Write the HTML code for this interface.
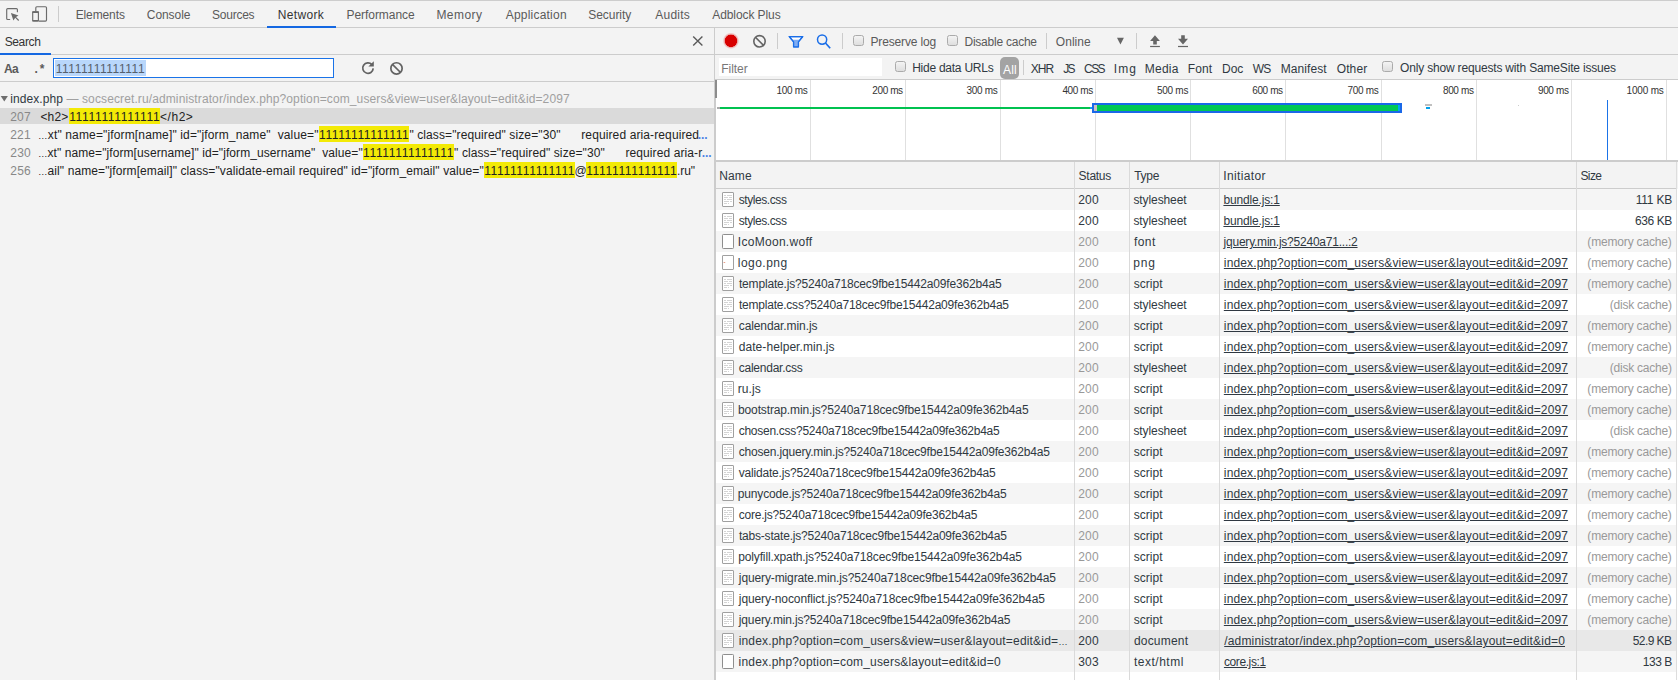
<!DOCTYPE html><html><head><meta charset="utf-8"><title>DevTools</title><style>

html,body{margin:0;padding:0;}
body{width:1678px;height:680px;overflow:hidden;background:#fff;position:relative;font-family:"Liberation Sans", sans-serif;font-size:12px;}
.r{position:absolute;}
.t{position:absolute;white-space:pre;line-height:16px;height:16px;}
svg{position:absolute;overflow:visible;}
u{text-decoration:underline;text-underline-offset:1px;}
.h{background:#f3ea06;}

</style></head><body>
<div class="r" style="left:0px;top:0px;width:1678px;height:680px;background:#ffffff;"></div>
<div class="r" style="left:0px;top:0px;width:1678px;height:27px;background:#f3f3f3;"></div>
<div class="r" style="left:0px;top:0px;width:1678px;height:1px;background:#cdcdcd;"></div>
<div class="r" style="left:0px;top:27px;width:1678px;height:1px;background:#cccccc;"></div>
<div class="r" style="left:0px;top:28px;width:714px;height:652px;background:#f3f3f3;"></div>
<div class="r" style="left:0px;top:54px;width:714px;height:1px;background:#cccccc;"></div>
<div class="r" style="left:0px;top:81px;width:714px;height:1px;background:#cccccc;"></div>
<div class="r" style="left:714px;top:28px;width:1px;height:652px;background:#cccccc;"></div>
<div class="r" style="left:715px;top:28px;width:963px;height:26px;background:#f3f3f3;"></div>
<div class="r" style="left:715px;top:54px;width:963px;height:1px;background:#cccccc;"></div>
<div class="r" style="left:715px;top:55px;width:963px;height:24px;background:#f3f3f3;"></div>
<div class="r" style="left:715px;top:79px;width:963px;height:1px;background:#cccccc;"></div>
<div class="r" style="left:715px;top:80px;width:963px;height:80px;background:#ffffff;"></div>
<div class="r" style="left:715px;top:160px;width:963px;height:2px;background:#cccccc;"></div>
<div class="r" style="left:715px;top:162px;width:962px;height:26px;background:#f3f3f3;"></div>
<div class="r" style="left:715px;top:188px;width:962px;height:1px;background:#cccccc;"></div>
<div class="r" style="left:715px;top:80px;width:1px;height:600px;background:#cccccc;"></div>
<div class="r" style="left:267px;top:26px;width:69px;height:2px;background:#1468e2;"></div>
<svg style="left:0;top:0" width="64" height="28" viewBox="0 0 64 28"><g fill="none" stroke="#6b6b6b" stroke-width="1.15" stroke-linecap="round"><path d="M17.4 11.7V9.6a1 1 0 0 0-1-1H7.7a1 1 0 0 0-1 1V18.5a1 1 0 0 0 1 1H9.7"/><path d="M35.8 11V7.7a1 1 0 0 1 1-1H45.5a1 1 0 0 1 1 1V20.1a1 1 0 0 1-1 1H39.2"/><rect x="32.7" y="11.9" width="5.7" height="9.1" rx="0.9"/></g><path d="M10.9 13L18.5 15.5L16 16.9L19.1 20L18.3 20.9L15.2 17.8L13.4 20.5Z" fill="#6b6b6b"/><rect x="32.2" y="11.2" width="6.7" height="1.7" rx="0.6" fill="#6b6b6b"/><rect x="32.2" y="20" width="6.7" height="1.6" rx="0.6" fill="#6b6b6b"/></svg>
<div class="r" style="left:58px;top:6px;width:1px;height:16px;background:#cccccc;"></div>
<div class="r" style="left:0px;top:53px;width:51px;height:2px;background:#1468e2;"></div>
<svg style="left:692px;top:36px" width="12" height="10" viewBox="0 0 12 10"><path d="M1.2 0.6L10.4 9.6M10.4 0.6L1.2 9.6" stroke="#5a5a5a" stroke-width="1.4" fill="none"/></svg>
<div class="r" style="left:53px;top:58px;width:281px;height:20px;background:#ffffff;box-sizing:border-box;border:1.3px solid #1a73e8;"></div>
<div class="r" style="left:55px;top:60px;width:91px;height:16px;background:#b9d7fb;"></div>
<svg style="left:340px;top:54px" width="80" height="28" viewBox="340 54 80 28"><path d="M371.9 64.6A5.25 5.25 0 1 0 373.2 68.4" fill="none" stroke="#626262" stroke-width="1.7"/><path d="M373.8 61.2V66.6H368.4Z" fill="#626262"/><circle cx="396.5" cy="68.4" r="5.65" fill="none" stroke="#626262" stroke-width="1.7"/><path d="M392.4 64.3L400.6 72.5" stroke="#626262" stroke-width="1.7"/></svg>
<svg style="left:0px;top:90px" width="10" height="14" viewBox="0 90 10 14"><path d="M0.7 96H7.9L4.3 101.5Z" fill="#6e6e6e"/></svg>
<div class="r" style="left:0px;top:108px;width:714px;height:16px;background:#dadada;"></div>
<div class="r" style="left:69.1px;top:108px;width:90.9px;height:16px;background:#f3ea06;"></div>
<div class="r" style="left:318.9px;top:126px;width:90.40000000000003px;height:16px;background:#f3ea06;"></div>
<div class="r" style="left:362.9px;top:144px;width:91.0px;height:16px;background:#f3ea06;"></div>
<div class="r" style="left:484.1px;top:162px;width:90.79999999999995px;height:16px;background:#f3ea06;"></div>
<div class="r" style="left:586.1px;top:162px;width:90.89999999999998px;height:16px;background:#f3ea06;"></div>
<svg style="left:716px;top:28px" width="130" height="26" viewBox="0 0 130 26"><defs><radialGradient id="rg"><stop offset="0.70" stop-color="#d80000"/><stop offset="0.76" stop-color="#e98080" stop-opacity="0.8"/><stop offset="1" stop-color="#f0b0b0" stop-opacity="0"/></radialGradient></defs><circle cx="14.95" cy="12.8" r="8.4" fill="url(#rg)"/><circle cx="43.5" cy="13.3" r="5.7" fill="none" stroke="#636363" stroke-width="1.6"/><path d="M39.4 9.2L47.6 17.4" stroke="#636363" stroke-width="1.6"/><path d="M73.3 8.6H86.7L82.4 13.8V18.8H77.6V13.8Z" fill="#ffffff" stroke="#1a6ee8" stroke-width="1.3" stroke-linejoin="round"/><path d="M76 11.7H84L82.4 13.8V18.8H77.6V13.8Z" fill="#7fadf3"/><path d="M73.3 8.6H86.7L82.4 13.8V18.8H77.6V13.8Z" fill="none" stroke="#1a6ee8" stroke-width="1.3" stroke-linejoin="round"/><circle cx="106.1" cy="11.6" r="4.6" fill="none" stroke="#1a6ee8" stroke-width="1.5"/><path d="M109.5 15L114.2 20.2" stroke="#1a6ee8" stroke-width="1.7"/></svg>
<div class="r" style="left:777px;top:33px;width:1px;height:16px;background:#cccccc;"></div>
<div class="r" style="left:842px;top:33px;width:1px;height:16px;background:#cccccc;"></div>
<div class="r" style="left:853px;top:35px;width:11px;height:11px;background:;box-sizing:border-box;border:1px solid #ababab;border-radius:2.5px;background:linear-gradient(#f4f4f4,#dedede);"></div>
<div class="r" style="left:947px;top:35px;width:11px;height:11px;background:;box-sizing:border-box;border:1px solid #ababab;border-radius:2.5px;background:linear-gradient(#f4f4f4,#dedede);"></div>
<div class="r" style="left:1046px;top:33px;width:1px;height:16px;background:#cccccc;"></div>
<svg style="left:1040px;top:28px" width="160" height="26" viewBox="1040 28 160 26"><g fill="#666666"><path d="M1117 37.8H1123.9L1120.45 44.4Z"/><path d="M1154.95 35.2L1159.9 40.9H1156.8V44.4H1153.2V40.9H1150.1Z"/><rect x="1150.1" y="45.9" width="9.8" height="1.2"/><path d="M1183 44.4L1188 38.7H1184.8V35.2H1181.2V38.7H1178Z"/><rect x="1178" y="45.9" width="10" height="1.2"/></g></svg>
<div class="r" style="left:1136px;top:33px;width:1px;height:16px;background:#cccccc;"></div>
<div class="r" style="left:719px;top:58px;width:163px;height:18px;background:#ffffff;"></div>
<div class="r" style="left:895px;top:61px;width:11px;height:11px;background:;box-sizing:border-box;border:1px solid #ababab;border-radius:2.5px;background:linear-gradient(#f4f4f4,#dedede);"></div>
<div class="r" style="left:1000px;top:57px;width:19px;height:22px;background:#a3a3a3;border-radius:5px;"></div>
<div class="r" style="left:1023px;top:60px;width:1px;height:15px;background:#cccccc;"></div>
<div class="r" style="left:1382px;top:61px;width:11px;height:11px;background:;box-sizing:border-box;border:1px solid #ababab;border-radius:2.5px;background:linear-gradient(#f4f4f4,#dedede);"></div>
<div class="r" style="left:715px;top:80px;width:2px;height:18px;background:#8c8c8c;"></div>
<div class="r" style="left:810px;top:80px;width:1px;height:80px;background:#e0e0e0;"></div>
<div class="r" style="left:905px;top:80px;width:1px;height:80px;background:#e0e0e0;"></div>
<div class="r" style="left:1000px;top:80px;width:1px;height:80px;background:#e0e0e0;"></div>
<div class="r" style="left:1095px;top:80px;width:1px;height:80px;background:#e0e0e0;"></div>
<div class="r" style="left:1190px;top:80px;width:1px;height:80px;background:#e0e0e0;"></div>
<div class="r" style="left:1285px;top:80px;width:1px;height:80px;background:#e0e0e0;"></div>
<div class="r" style="left:1381px;top:80px;width:1px;height:80px;background:#e0e0e0;"></div>
<div class="r" style="left:1476px;top:80px;width:1px;height:80px;background:#e0e0e0;"></div>
<div class="r" style="left:1571px;top:80px;width:1px;height:80px;background:#e0e0e0;"></div>
<div class="r" style="left:1666px;top:80px;width:1px;height:80px;background:#e0e0e0;"></div>
<div class="r" style="left:717px;top:107px;width:3px;height:2px;background:#aaaaaa;"></div>
<div class="r" style="left:720px;top:107px;width:370px;height:2px;background:#00c250;"></div>
<div class="r" style="left:1090px;top:107px;width:2px;height:2px;background:#1a9cf0;"></div>
<div class="r" style="left:1092px;top:103.4px;width:310px;height:9.8px;background:#1a68e8;"></div>
<div class="r" style="left:1093.8px;top:105.2px;width:306.2px;height:5.6px;background:#00c853;"></div>
<div class="r" style="left:1093.8px;top:105.2px;width:3px;height:5.6px;background:#cdbfc3;"></div>
<div class="r" style="left:1398px;top:105.2px;width:2px;height:5.6px;background:#00a8f0;"></div>
<div class="r" style="left:1425px;top:104.2px;width:7.4px;height:1.6px;background:#c0c0c0;"></div>
<div class="r" style="left:1426px;top:107px;width:4px;height:2px;background:#00a0eb;"></div>
<div class="r" style="left:1518px;top:104.5px;width:1px;height:1px;background:#cccccc;"></div>
<div class="r" style="left:1607px;top:100px;width:1.4px;height:60px;background:#1a73e8;"></div>
<div class="r" style="left:716px;top:189px;width:960px;height:21px;background:#f5f5f5;"></div>
<svg style="left:722px;top:192px" width="12" height="15" viewBox="0 0 12 15"><rect x="0.5" y="0.5" width="11" height="14" rx="0.4" fill="#fff" stroke="#a0a0a0"/><rect x="2" y="3" width="2" height="1" fill="#d4d4d4"/><rect x="5" y="3" width="5" height="1" fill="#d4d4d4"/><rect x="2" y="5" width="4" height="1" fill="#d4d4d4"/><rect x="7" y="5" width="3" height="1" fill="#d4d4d4"/><rect x="2" y="7" width="2" height="1" fill="#d4d4d4"/><rect x="5" y="7" width="5" height="1" fill="#d4d4d4"/><rect x="2" y="9" width="5" height="1" fill="#d4d4d4"/><rect x="8" y="9" width="2" height="1" fill="#d4d4d4"/><rect x="2" y="11" width="3" height="1" fill="#d4d4d4"/><rect x="6" y="11" width="1" height="1" fill="#d4d4d4"/></svg>
<div class="r" style="left:716px;top:210px;width:960px;height:21px;background:#ffffff;"></div>
<svg style="left:722px;top:213px" width="12" height="15" viewBox="0 0 12 15"><rect x="0.5" y="0.5" width="11" height="14" rx="0.4" fill="#fff" stroke="#a0a0a0"/><rect x="2" y="3" width="2" height="1" fill="#d4d4d4"/><rect x="5" y="3" width="5" height="1" fill="#d4d4d4"/><rect x="2" y="5" width="4" height="1" fill="#d4d4d4"/><rect x="7" y="5" width="3" height="1" fill="#d4d4d4"/><rect x="2" y="7" width="2" height="1" fill="#d4d4d4"/><rect x="5" y="7" width="5" height="1" fill="#d4d4d4"/><rect x="2" y="9" width="5" height="1" fill="#d4d4d4"/><rect x="8" y="9" width="2" height="1" fill="#d4d4d4"/><rect x="2" y="11" width="3" height="1" fill="#d4d4d4"/><rect x="6" y="11" width="1" height="1" fill="#d4d4d4"/></svg>
<div class="r" style="left:716px;top:231px;width:960px;height:21px;background:#f5f5f5;"></div>
<svg style="left:722px;top:234px" width="12" height="15" viewBox="0 0 12 15"><rect x="0.5" y="0.5" width="11" height="14" rx="0.8" fill="#fff" stroke="#8e8e8e"/></svg>
<div class="r" style="left:716px;top:252px;width:960px;height:21px;background:#ffffff;"></div>
<svg style="left:722px;top:255px" width="12" height="15" viewBox="0 0 12 15"><rect x="0.5" y="0.5" width="11" height="14" rx="0.4" fill="#fff" stroke="#a0a0a0"/><rect x="1.6" y="7" width="1.6" height="1" fill="#e9a08c"/></svg>
<div class="r" style="left:716px;top:273px;width:960px;height:21px;background:#f5f5f5;"></div>
<svg style="left:722px;top:276px" width="12" height="15" viewBox="0 0 12 15"><rect x="0.5" y="0.5" width="11" height="14" rx="0.4" fill="#fff" stroke="#a0a0a0"/><rect x="2" y="3" width="2" height="1" fill="#d4d4d4"/><rect x="5" y="3" width="5" height="1" fill="#d4d4d4"/><rect x="2" y="5" width="4" height="1" fill="#d4d4d4"/><rect x="7" y="5" width="3" height="1" fill="#d4d4d4"/><rect x="2" y="7" width="2" height="1" fill="#d4d4d4"/><rect x="5" y="7" width="5" height="1" fill="#d4d4d4"/><rect x="2" y="9" width="5" height="1" fill="#d4d4d4"/><rect x="8" y="9" width="2" height="1" fill="#d4d4d4"/><rect x="2" y="11" width="3" height="1" fill="#d4d4d4"/><rect x="6" y="11" width="1" height="1" fill="#d4d4d4"/></svg>
<div class="r" style="left:716px;top:294px;width:960px;height:21px;background:#ffffff;"></div>
<svg style="left:722px;top:297px" width="12" height="15" viewBox="0 0 12 15"><rect x="0.5" y="0.5" width="11" height="14" rx="0.4" fill="#fff" stroke="#a0a0a0"/><rect x="2" y="3" width="2" height="1" fill="#d4d4d4"/><rect x="5" y="3" width="5" height="1" fill="#d4d4d4"/><rect x="2" y="5" width="4" height="1" fill="#d4d4d4"/><rect x="7" y="5" width="3" height="1" fill="#d4d4d4"/><rect x="2" y="7" width="2" height="1" fill="#d4d4d4"/><rect x="5" y="7" width="5" height="1" fill="#d4d4d4"/><rect x="2" y="9" width="5" height="1" fill="#d4d4d4"/><rect x="8" y="9" width="2" height="1" fill="#d4d4d4"/><rect x="2" y="11" width="3" height="1" fill="#d4d4d4"/><rect x="6" y="11" width="1" height="1" fill="#d4d4d4"/></svg>
<div class="r" style="left:716px;top:315px;width:960px;height:21px;background:#f5f5f5;"></div>
<svg style="left:722px;top:318px" width="12" height="15" viewBox="0 0 12 15"><rect x="0.5" y="0.5" width="11" height="14" rx="0.4" fill="#fff" stroke="#a0a0a0"/><rect x="2" y="3" width="2" height="1" fill="#d4d4d4"/><rect x="5" y="3" width="5" height="1" fill="#d4d4d4"/><rect x="2" y="5" width="4" height="1" fill="#d4d4d4"/><rect x="7" y="5" width="3" height="1" fill="#d4d4d4"/><rect x="2" y="7" width="2" height="1" fill="#d4d4d4"/><rect x="5" y="7" width="5" height="1" fill="#d4d4d4"/><rect x="2" y="9" width="5" height="1" fill="#d4d4d4"/><rect x="8" y="9" width="2" height="1" fill="#d4d4d4"/><rect x="2" y="11" width="3" height="1" fill="#d4d4d4"/><rect x="6" y="11" width="1" height="1" fill="#d4d4d4"/></svg>
<div class="r" style="left:716px;top:336px;width:960px;height:21px;background:#ffffff;"></div>
<svg style="left:722px;top:339px" width="12" height="15" viewBox="0 0 12 15"><rect x="0.5" y="0.5" width="11" height="14" rx="0.4" fill="#fff" stroke="#a0a0a0"/><rect x="2" y="3" width="2" height="1" fill="#d4d4d4"/><rect x="5" y="3" width="5" height="1" fill="#d4d4d4"/><rect x="2" y="5" width="4" height="1" fill="#d4d4d4"/><rect x="7" y="5" width="3" height="1" fill="#d4d4d4"/><rect x="2" y="7" width="2" height="1" fill="#d4d4d4"/><rect x="5" y="7" width="5" height="1" fill="#d4d4d4"/><rect x="2" y="9" width="5" height="1" fill="#d4d4d4"/><rect x="8" y="9" width="2" height="1" fill="#d4d4d4"/><rect x="2" y="11" width="3" height="1" fill="#d4d4d4"/><rect x="6" y="11" width="1" height="1" fill="#d4d4d4"/></svg>
<div class="r" style="left:716px;top:357px;width:960px;height:21px;background:#f5f5f5;"></div>
<svg style="left:722px;top:360px" width="12" height="15" viewBox="0 0 12 15"><rect x="0.5" y="0.5" width="11" height="14" rx="0.4" fill="#fff" stroke="#a0a0a0"/><rect x="2" y="3" width="2" height="1" fill="#d4d4d4"/><rect x="5" y="3" width="5" height="1" fill="#d4d4d4"/><rect x="2" y="5" width="4" height="1" fill="#d4d4d4"/><rect x="7" y="5" width="3" height="1" fill="#d4d4d4"/><rect x="2" y="7" width="2" height="1" fill="#d4d4d4"/><rect x="5" y="7" width="5" height="1" fill="#d4d4d4"/><rect x="2" y="9" width="5" height="1" fill="#d4d4d4"/><rect x="8" y="9" width="2" height="1" fill="#d4d4d4"/><rect x="2" y="11" width="3" height="1" fill="#d4d4d4"/><rect x="6" y="11" width="1" height="1" fill="#d4d4d4"/></svg>
<div class="r" style="left:716px;top:378px;width:960px;height:21px;background:#ffffff;"></div>
<svg style="left:722px;top:381px" width="12" height="15" viewBox="0 0 12 15"><rect x="0.5" y="0.5" width="11" height="14" rx="0.4" fill="#fff" stroke="#a0a0a0"/><rect x="2" y="3" width="2" height="1" fill="#d4d4d4"/><rect x="5" y="3" width="5" height="1" fill="#d4d4d4"/><rect x="2" y="5" width="4" height="1" fill="#d4d4d4"/><rect x="7" y="5" width="3" height="1" fill="#d4d4d4"/><rect x="2" y="7" width="2" height="1" fill="#d4d4d4"/><rect x="5" y="7" width="5" height="1" fill="#d4d4d4"/><rect x="2" y="9" width="5" height="1" fill="#d4d4d4"/><rect x="8" y="9" width="2" height="1" fill="#d4d4d4"/><rect x="2" y="11" width="3" height="1" fill="#d4d4d4"/><rect x="6" y="11" width="1" height="1" fill="#d4d4d4"/></svg>
<div class="r" style="left:716px;top:399px;width:960px;height:21px;background:#f5f5f5;"></div>
<svg style="left:722px;top:402px" width="12" height="15" viewBox="0 0 12 15"><rect x="0.5" y="0.5" width="11" height="14" rx="0.4" fill="#fff" stroke="#a0a0a0"/><rect x="2" y="3" width="2" height="1" fill="#d4d4d4"/><rect x="5" y="3" width="5" height="1" fill="#d4d4d4"/><rect x="2" y="5" width="4" height="1" fill="#d4d4d4"/><rect x="7" y="5" width="3" height="1" fill="#d4d4d4"/><rect x="2" y="7" width="2" height="1" fill="#d4d4d4"/><rect x="5" y="7" width="5" height="1" fill="#d4d4d4"/><rect x="2" y="9" width="5" height="1" fill="#d4d4d4"/><rect x="8" y="9" width="2" height="1" fill="#d4d4d4"/><rect x="2" y="11" width="3" height="1" fill="#d4d4d4"/><rect x="6" y="11" width="1" height="1" fill="#d4d4d4"/></svg>
<div class="r" style="left:716px;top:420px;width:960px;height:21px;background:#ffffff;"></div>
<svg style="left:722px;top:423px" width="12" height="15" viewBox="0 0 12 15"><rect x="0.5" y="0.5" width="11" height="14" rx="0.4" fill="#fff" stroke="#a0a0a0"/><rect x="2" y="3" width="2" height="1" fill="#d4d4d4"/><rect x="5" y="3" width="5" height="1" fill="#d4d4d4"/><rect x="2" y="5" width="4" height="1" fill="#d4d4d4"/><rect x="7" y="5" width="3" height="1" fill="#d4d4d4"/><rect x="2" y="7" width="2" height="1" fill="#d4d4d4"/><rect x="5" y="7" width="5" height="1" fill="#d4d4d4"/><rect x="2" y="9" width="5" height="1" fill="#d4d4d4"/><rect x="8" y="9" width="2" height="1" fill="#d4d4d4"/><rect x="2" y="11" width="3" height="1" fill="#d4d4d4"/><rect x="6" y="11" width="1" height="1" fill="#d4d4d4"/></svg>
<div class="r" style="left:716px;top:441px;width:960px;height:21px;background:#f5f5f5;"></div>
<svg style="left:722px;top:444px" width="12" height="15" viewBox="0 0 12 15"><rect x="0.5" y="0.5" width="11" height="14" rx="0.4" fill="#fff" stroke="#a0a0a0"/><rect x="2" y="3" width="2" height="1" fill="#d4d4d4"/><rect x="5" y="3" width="5" height="1" fill="#d4d4d4"/><rect x="2" y="5" width="4" height="1" fill="#d4d4d4"/><rect x="7" y="5" width="3" height="1" fill="#d4d4d4"/><rect x="2" y="7" width="2" height="1" fill="#d4d4d4"/><rect x="5" y="7" width="5" height="1" fill="#d4d4d4"/><rect x="2" y="9" width="5" height="1" fill="#d4d4d4"/><rect x="8" y="9" width="2" height="1" fill="#d4d4d4"/><rect x="2" y="11" width="3" height="1" fill="#d4d4d4"/><rect x="6" y="11" width="1" height="1" fill="#d4d4d4"/></svg>
<div class="r" style="left:716px;top:462px;width:960px;height:21px;background:#ffffff;"></div>
<svg style="left:722px;top:465px" width="12" height="15" viewBox="0 0 12 15"><rect x="0.5" y="0.5" width="11" height="14" rx="0.4" fill="#fff" stroke="#a0a0a0"/><rect x="2" y="3" width="2" height="1" fill="#d4d4d4"/><rect x="5" y="3" width="5" height="1" fill="#d4d4d4"/><rect x="2" y="5" width="4" height="1" fill="#d4d4d4"/><rect x="7" y="5" width="3" height="1" fill="#d4d4d4"/><rect x="2" y="7" width="2" height="1" fill="#d4d4d4"/><rect x="5" y="7" width="5" height="1" fill="#d4d4d4"/><rect x="2" y="9" width="5" height="1" fill="#d4d4d4"/><rect x="8" y="9" width="2" height="1" fill="#d4d4d4"/><rect x="2" y="11" width="3" height="1" fill="#d4d4d4"/><rect x="6" y="11" width="1" height="1" fill="#d4d4d4"/></svg>
<div class="r" style="left:716px;top:483px;width:960px;height:21px;background:#f5f5f5;"></div>
<svg style="left:722px;top:486px" width="12" height="15" viewBox="0 0 12 15"><rect x="0.5" y="0.5" width="11" height="14" rx="0.4" fill="#fff" stroke="#a0a0a0"/><rect x="2" y="3" width="2" height="1" fill="#d4d4d4"/><rect x="5" y="3" width="5" height="1" fill="#d4d4d4"/><rect x="2" y="5" width="4" height="1" fill="#d4d4d4"/><rect x="7" y="5" width="3" height="1" fill="#d4d4d4"/><rect x="2" y="7" width="2" height="1" fill="#d4d4d4"/><rect x="5" y="7" width="5" height="1" fill="#d4d4d4"/><rect x="2" y="9" width="5" height="1" fill="#d4d4d4"/><rect x="8" y="9" width="2" height="1" fill="#d4d4d4"/><rect x="2" y="11" width="3" height="1" fill="#d4d4d4"/><rect x="6" y="11" width="1" height="1" fill="#d4d4d4"/></svg>
<div class="r" style="left:716px;top:504px;width:960px;height:21px;background:#ffffff;"></div>
<svg style="left:722px;top:507px" width="12" height="15" viewBox="0 0 12 15"><rect x="0.5" y="0.5" width="11" height="14" rx="0.4" fill="#fff" stroke="#a0a0a0"/><rect x="2" y="3" width="2" height="1" fill="#d4d4d4"/><rect x="5" y="3" width="5" height="1" fill="#d4d4d4"/><rect x="2" y="5" width="4" height="1" fill="#d4d4d4"/><rect x="7" y="5" width="3" height="1" fill="#d4d4d4"/><rect x="2" y="7" width="2" height="1" fill="#d4d4d4"/><rect x="5" y="7" width="5" height="1" fill="#d4d4d4"/><rect x="2" y="9" width="5" height="1" fill="#d4d4d4"/><rect x="8" y="9" width="2" height="1" fill="#d4d4d4"/><rect x="2" y="11" width="3" height="1" fill="#d4d4d4"/><rect x="6" y="11" width="1" height="1" fill="#d4d4d4"/></svg>
<div class="r" style="left:716px;top:525px;width:960px;height:21px;background:#f5f5f5;"></div>
<svg style="left:722px;top:528px" width="12" height="15" viewBox="0 0 12 15"><rect x="0.5" y="0.5" width="11" height="14" rx="0.4" fill="#fff" stroke="#a0a0a0"/><rect x="2" y="3" width="2" height="1" fill="#d4d4d4"/><rect x="5" y="3" width="5" height="1" fill="#d4d4d4"/><rect x="2" y="5" width="4" height="1" fill="#d4d4d4"/><rect x="7" y="5" width="3" height="1" fill="#d4d4d4"/><rect x="2" y="7" width="2" height="1" fill="#d4d4d4"/><rect x="5" y="7" width="5" height="1" fill="#d4d4d4"/><rect x="2" y="9" width="5" height="1" fill="#d4d4d4"/><rect x="8" y="9" width="2" height="1" fill="#d4d4d4"/><rect x="2" y="11" width="3" height="1" fill="#d4d4d4"/><rect x="6" y="11" width="1" height="1" fill="#d4d4d4"/></svg>
<div class="r" style="left:716px;top:546px;width:960px;height:21px;background:#ffffff;"></div>
<svg style="left:722px;top:549px" width="12" height="15" viewBox="0 0 12 15"><rect x="0.5" y="0.5" width="11" height="14" rx="0.4" fill="#fff" stroke="#a0a0a0"/><rect x="2" y="3" width="2" height="1" fill="#d4d4d4"/><rect x="5" y="3" width="5" height="1" fill="#d4d4d4"/><rect x="2" y="5" width="4" height="1" fill="#d4d4d4"/><rect x="7" y="5" width="3" height="1" fill="#d4d4d4"/><rect x="2" y="7" width="2" height="1" fill="#d4d4d4"/><rect x="5" y="7" width="5" height="1" fill="#d4d4d4"/><rect x="2" y="9" width="5" height="1" fill="#d4d4d4"/><rect x="8" y="9" width="2" height="1" fill="#d4d4d4"/><rect x="2" y="11" width="3" height="1" fill="#d4d4d4"/><rect x="6" y="11" width="1" height="1" fill="#d4d4d4"/></svg>
<div class="r" style="left:716px;top:567px;width:960px;height:21px;background:#f5f5f5;"></div>
<svg style="left:722px;top:570px" width="12" height="15" viewBox="0 0 12 15"><rect x="0.5" y="0.5" width="11" height="14" rx="0.4" fill="#fff" stroke="#a0a0a0"/><rect x="2" y="3" width="2" height="1" fill="#d4d4d4"/><rect x="5" y="3" width="5" height="1" fill="#d4d4d4"/><rect x="2" y="5" width="4" height="1" fill="#d4d4d4"/><rect x="7" y="5" width="3" height="1" fill="#d4d4d4"/><rect x="2" y="7" width="2" height="1" fill="#d4d4d4"/><rect x="5" y="7" width="5" height="1" fill="#d4d4d4"/><rect x="2" y="9" width="5" height="1" fill="#d4d4d4"/><rect x="8" y="9" width="2" height="1" fill="#d4d4d4"/><rect x="2" y="11" width="3" height="1" fill="#d4d4d4"/><rect x="6" y="11" width="1" height="1" fill="#d4d4d4"/></svg>
<div class="r" style="left:716px;top:588px;width:960px;height:21px;background:#ffffff;"></div>
<svg style="left:722px;top:591px" width="12" height="15" viewBox="0 0 12 15"><rect x="0.5" y="0.5" width="11" height="14" rx="0.4" fill="#fff" stroke="#a0a0a0"/><rect x="2" y="3" width="2" height="1" fill="#d4d4d4"/><rect x="5" y="3" width="5" height="1" fill="#d4d4d4"/><rect x="2" y="5" width="4" height="1" fill="#d4d4d4"/><rect x="7" y="5" width="3" height="1" fill="#d4d4d4"/><rect x="2" y="7" width="2" height="1" fill="#d4d4d4"/><rect x="5" y="7" width="5" height="1" fill="#d4d4d4"/><rect x="2" y="9" width="5" height="1" fill="#d4d4d4"/><rect x="8" y="9" width="2" height="1" fill="#d4d4d4"/><rect x="2" y="11" width="3" height="1" fill="#d4d4d4"/><rect x="6" y="11" width="1" height="1" fill="#d4d4d4"/></svg>
<div class="r" style="left:716px;top:609px;width:960px;height:21px;background:#f5f5f5;"></div>
<svg style="left:722px;top:612px" width="12" height="15" viewBox="0 0 12 15"><rect x="0.5" y="0.5" width="11" height="14" rx="0.4" fill="#fff" stroke="#a0a0a0"/><rect x="2" y="3" width="2" height="1" fill="#d4d4d4"/><rect x="5" y="3" width="5" height="1" fill="#d4d4d4"/><rect x="2" y="5" width="4" height="1" fill="#d4d4d4"/><rect x="7" y="5" width="3" height="1" fill="#d4d4d4"/><rect x="2" y="7" width="2" height="1" fill="#d4d4d4"/><rect x="5" y="7" width="5" height="1" fill="#d4d4d4"/><rect x="2" y="9" width="5" height="1" fill="#d4d4d4"/><rect x="8" y="9" width="2" height="1" fill="#d4d4d4"/><rect x="2" y="11" width="3" height="1" fill="#d4d4d4"/><rect x="6" y="11" width="1" height="1" fill="#d4d4d4"/></svg>
<div class="r" style="left:716px;top:630px;width:960px;height:21px;background:#e8e8e8;"></div>
<svg style="left:722px;top:633px" width="12" height="15" viewBox="0 0 12 15"><rect x="0.5" y="0.5" width="11" height="14" rx="0.4" fill="#fff" stroke="#a0a0a0"/><rect x="2" y="3" width="2" height="1" fill="#d4d4d4"/><rect x="5" y="3" width="5" height="1" fill="#d4d4d4"/><rect x="2" y="5" width="4" height="1" fill="#d4d4d4"/><rect x="7" y="5" width="3" height="1" fill="#d4d4d4"/><rect x="2" y="7" width="2" height="1" fill="#d4d4d4"/><rect x="5" y="7" width="5" height="1" fill="#d4d4d4"/><rect x="2" y="9" width="5" height="1" fill="#d4d4d4"/><rect x="8" y="9" width="2" height="1" fill="#d4d4d4"/><rect x="2" y="11" width="3" height="1" fill="#d4d4d4"/><rect x="6" y="11" width="1" height="1" fill="#d4d4d4"/></svg>
<div class="r" style="left:716px;top:651px;width:960px;height:21px;background:#f5f5f5;"></div>
<svg style="left:722px;top:654px" width="12" height="15" viewBox="0 0 12 15"><rect x="0.5" y="0.5" width="11" height="14" rx="0.8" fill="#fff" stroke="#8e8e8e"/></svg>
<div class="r" style="left:1074px;top:162px;width:1px;height:518px;background:#dadada;"></div>
<div class="r" style="left:1129px;top:162px;width:1px;height:518px;background:#dadada;"></div>
<div class="r" style="left:1219px;top:162px;width:1px;height:518px;background:#dadada;"></div>
<div class="r" style="left:1576px;top:162px;width:1px;height:518px;background:#dadada;"></div>
<div class="r" style="left:1676px;top:162px;width:1px;height:518px;background:#dddddd;"></div>
<div class="r" style="left:1677px;top:162px;width:1px;height:27px;background:#f3f3f3;"></div>
<div class="r" style="left:1677px;top:189px;width:1px;height:491px;background:#ffffff;"></div>
<span class="t" style="left:75.70px;top:7px;color:#5a5a5a;letter-spacing:-0.118px;">Elements</span>
<span class="t" style="left:146.79px;top:7px;color:#5a5a5a;letter-spacing:-0.057px;">Console</span>
<span class="t" style="left:212.09px;top:7px;color:#5a5a5a;letter-spacing:-0.254px;">Sources</span>
<span class="t" style="left:277.69px;top:7px;color:#333333;letter-spacing:0.354px;">Network</span>
<span class="t" style="left:346.44px;top:7px;color:#5a5a5a;letter-spacing:-0.042px;">Performance</span>
<span class="t" style="left:436.38px;top:7px;color:#5a5a5a;letter-spacing:0.456px;">Memory</span>
<span class="t" style="left:505.75px;top:7px;color:#5a5a5a;letter-spacing:0.210px;">Application</span>
<span class="t" style="left:588.19px;top:7px;color:#5a5a5a;letter-spacing:-0.041px;">Security</span>
<span class="t" style="left:655.34px;top:7px;color:#5a5a5a;letter-spacing:0.209px;">Audits</span>
<span class="t" style="left:712.22px;top:7px;color:#5a5a5a;letter-spacing:-0.086px;">Adblock Plus</span>
<span class="t" style="left:4.68px;top:34px;color:#333333;letter-spacing:-0.371px;">Search</span>
<span class="t" style="left:3.95px;top:61px;color:#5a5a5a;font-weight:700;letter-spacing:-0.525px;">Aa</span>
<span class="t" style="left:34.61px;top:61px;color:#5a5a5a;font-weight:700;letter-spacing:1.844px;">.*</span>
<span class="t" style="left:55.66px;top:61px;color:#56606c;letter-spacing:0.546px;">11111111111111</span>
<span class="t" style="left:10.18px;top:91px;color:#303942;letter-spacing:0.073px;">index.php</span>
<span class="t" style="left:66.44px;top:91px;color:#a0a0a0;letter-spacing:0.114px;">— socsecret.ru/administrator/index.php?option=com_users&amp;view=user&amp;layout=edit&amp;id=2097</span>
<span class="t" style="left:10.28px;top:109px;color:#888888;letter-spacing:0.161px;">207</span>
<span class="t" style="left:10.28px;top:127px;color:#888888;letter-spacing:0.161px;">221</span>
<span class="t" style="left:10.28px;top:145px;color:#888888;letter-spacing:0.221px;">230</span>
<span class="t" style="left:10.28px;top:163px;color:#888888;letter-spacing:0.227px;">256</span>
<span class="t" style="left:40.52px;top:109px;color:#222222;letter-spacing:0.089px;">&lt;h2&gt;</span>
<span class="t" style="left:69.14px;top:109px;color:#222;letter-spacing:0.667px;">11111111111111</span>
<span class="t" style="left:160.12px;top:109px;color:#222222;letter-spacing:0.505px;">&lt;/h2&gt;</span>
<span class="t" style="left:38.11px;top:127px;color:#222222;letter-spacing:0.146px;"><span style="font-size:9.5px">…</span>xt&quot; name=&quot;jform[name]&quot; id=&quot;jform_name&quot;  value=&quot;</span>
<span class="t" style="left:319.07px;top:127px;color:#222;letter-spacing:0.606px;">11111111111111</span>
<span class="t" style="left:409.39px;top:127px;color:#222222;letter-spacing:0.113px;">&quot; class=&quot;required&quot; size=&quot;30&quot;      required aria-required</span>
<span class="t" style="left:697.70px;top:127px;color:#4d82e6;font-weight:700;letter-spacing:-0.1px;">...</span>
<span class="t" style="left:37.93px;top:145px;color:#222222;letter-spacing:0.082px;"><span style="font-size:9.5px">…</span>xt&quot; name=&quot;jform[username]&quot; id=&quot;jform_username&quot;  value=&quot;</span>
<span class="t" style="left:363.07px;top:145px;color:#222;letter-spacing:0.645px;">11111111111111</span>
<span class="t" style="left:454.11px;top:145px;color:#222222;letter-spacing:0.097px;">&quot; class=&quot;required&quot; size=&quot;30&quot;      required aria-r</span>
<span class="t" style="left:701.70px;top:145px;color:#4d82e6;font-weight:700;letter-spacing:-0.1px;">...</span>
<span class="t" style="left:37.93px;top:163px;color:#222222;letter-spacing:0.099px;"><span style="font-size:9.5px">…</span>ail&quot; name=&quot;jform[email]&quot; class=&quot;validate-email required&quot; id=&quot;jform_email&quot; value=&quot;</span>
<span class="t" style="left:484.14px;top:163px;color:#222;letter-spacing:0.655px;">11111111111111</span>
<span class="t" style="left:574.42px;top:163px;color:#222222;">@</span>
<span class="t" style="left:586.14px;top:163px;color:#222;letter-spacing:0.667px;">11111111111111</span>
<span class="t" style="left:676.89px;top:163px;color:#222222;letter-spacing:-0.026px;">.ru&quot;</span>
<span class="t" style="left:870.42px;top:34px;color:#5a5a5a;letter-spacing:-0.137px;">Preserve log</span>
<span class="t" style="left:964.53px;top:34px;color:#5a5a5a;letter-spacing:-0.241px;">Disable cache</span>
<span class="t" style="left:1055.79px;top:34px;color:#5a5a5a;letter-spacing:0.049px;">Online</span>
<span class="t" style="left:721.25px;top:61px;color:#777777;letter-spacing:-0.035px;">Filter</span>
<span class="t" style="left:912.18px;top:60px;color:#303942;letter-spacing:-0.250px;">Hide data URLs</span>
<span class="t" style="left:1002.89px;top:62px;color:#ffffff;letter-spacing:0.261px;">All</span>
<span class="t" style="left:1030.79px;top:61px;color:#303942;letter-spacing:-1.001px;">XHR</span>
<span class="t" style="left:1063.15px;top:61px;color:#303942;letter-spacing:-1.600px;">JS</span>
<span class="t" style="left:1084.12px;top:61px;color:#303942;letter-spacing:-1.600px;">CSS</span>
<span class="t" style="left:1113.81px;top:61px;color:#303942;letter-spacing:1.041px;">Img</span>
<span class="t" style="left:1144.83px;top:61px;color:#303942;letter-spacing:0.210px;">Media</span>
<span class="t" style="left:1187.85px;top:61px;color:#303942;letter-spacing:0.059px;">Font</span>
<span class="t" style="left:1222.00px;top:61px;color:#303942;">Doc</span>
<span class="t" style="left:1252.76px;top:61px;color:#303942;letter-spacing:-0.803px;">WS</span>
<span class="t" style="left:1280.70px;top:61px;color:#303942;letter-spacing:0.083px;">Manifest</span>
<span class="t" style="left:1336.71px;top:61px;color:#303942;letter-spacing:0.115px;">Other</span>
<span class="t" style="left:1400.01px;top:60px;color:#303942;letter-spacing:-0.176px;">Only show requests with SameSite issues</span>
<span class="t" style="left:776.57px;top:83px;color:#333333;font-size:10px;letter-spacing:-0.331px;">100 ms</span>
<span class="t" style="left:872.30px;top:83px;color:#333333;font-size:10px;letter-spacing:-0.395px;">200 ms</span>
<span class="t" style="left:966.54px;top:83px;color:#333333;font-size:10px;letter-spacing:-0.327px;">300 ms</span>
<span class="t" style="left:1062.39px;top:83px;color:#333333;font-size:10px;letter-spacing:-0.384px;">400 ms</span>
<span class="t" style="left:1157.02px;top:83px;color:#333333;font-size:10px;letter-spacing:-0.278px;">500 ms</span>
<span class="t" style="left:1252.28px;top:83px;color:#333333;font-size:10px;letter-spacing:-0.390px;">600 ms</span>
<span class="t" style="left:1347.59px;top:83px;color:#333333;font-size:10px;letter-spacing:-0.336px;">700 ms</span>
<span class="t" style="left:1442.94px;top:83px;color:#333333;font-size:10px;letter-spacing:-0.347px;">800 ms</span>
<span class="t" style="left:1537.95px;top:83px;color:#333333;font-size:10px;letter-spacing:-0.348px;">900 ms</span>
<span class="t" style="left:1626.60px;top:83px;color:#333333;font-size:10px;letter-spacing:-0.186px;">1000 ms</span>
<span class="t" style="left:719.24px;top:168px;color:#303942;letter-spacing:0.112px;">Name</span>
<span class="t" style="left:1078.61px;top:168px;color:#303942;letter-spacing:-0.277px;">Status</span>
<span class="t" style="left:1134.18px;top:168px;color:#303942;letter-spacing:-0.279px;">Type</span>
<span class="t" style="left:1223.35px;top:168px;color:#303942;letter-spacing:0.340px;">Initiator</span>
<span class="t" style="left:1580.42px;top:168px;color:#303942;letter-spacing:-0.575px;">Size</span>
<span class="t" style="left:738.68px;top:192px;color:#303942;letter-spacing:-0.416px;">styles.css</span>
<span class="t" style="left:1078.29px;top:192px;color:#303942;letter-spacing:0.131px;">200</span>
<span class="t" style="left:1133.48px;top:192px;color:#303942;letter-spacing:-0.101px;">stylesheet</span>
<span class="t" style="left:1223.42px;top:192px;color:#303942;letter-spacing:-0.152px;"><u>bundle.js:1</u></span>
<span class="t" style="left:1635.65px;top:192px;color:#303942;letter-spacing:-0.191px;">111 KB</span>
<span class="t" style="left:738.68px;top:213px;color:#303942;letter-spacing:-0.416px;">styles.css</span>
<span class="t" style="left:1078.29px;top:213px;color:#303942;letter-spacing:0.131px;">200</span>
<span class="t" style="left:1133.48px;top:213px;color:#303942;letter-spacing:-0.101px;">stylesheet</span>
<span class="t" style="left:1223.42px;top:213px;color:#303942;letter-spacing:-0.152px;"><u>bundle.js:1</u></span>
<span class="t" style="left:1635.05px;top:213px;color:#303942;letter-spacing:-0.429px;">636 KB</span>
<span class="t" style="left:737.80px;top:234px;color:#303942;letter-spacing:0.289px;">IcoMoon.woff</span>
<span class="t" style="left:1078.29px;top:234px;color:#999999;letter-spacing:0.131px;">200</span>
<span class="t" style="left:1133.97px;top:234px;color:#303942;letter-spacing:0.428px;">font</span>
<span class="t" style="left:1223.58px;top:234px;color:#303942;letter-spacing:-0.227px;"><u>jquery.min.js?5240a71...:2</u></span>
<span class="t" style="left:1587.36px;top:234px;color:#999999;letter-spacing:-0.177px;">(memory cache)</span>
<span class="t" style="left:737.78px;top:255px;color:#303942;letter-spacing:0.471px;">logo.png</span>
<span class="t" style="left:1078.29px;top:255px;color:#999999;letter-spacing:0.131px;">200</span>
<span class="t" style="left:1133.30px;top:255px;color:#303942;letter-spacing:0.805px;">png</span>
<span class="t" style="left:1223.83px;top:255px;color:#303942;letter-spacing:0.131px;"><u>index.php?option=com_users&amp;view=user&amp;layout=edit&amp;id=2097</u></span>
<span class="t" style="left:1587.36px;top:255px;color:#999999;letter-spacing:-0.177px;">(memory cache)</span>
<span class="t" style="left:738.91px;top:276px;color:#303942;letter-spacing:-0.174px;">template.js?5240a718cec9fbe15442a09fe362b4a5</span>
<span class="t" style="left:1078.29px;top:276px;color:#999999;letter-spacing:0.131px;">200</span>
<span class="t" style="left:1133.80px;top:276px;color:#303942;">script</span>
<span class="t" style="left:1223.83px;top:276px;color:#303942;letter-spacing:0.131px;"><u>index.php?option=com_users&amp;view=user&amp;layout=edit&amp;id=2097</u></span>
<span class="t" style="left:1587.36px;top:276px;color:#999999;letter-spacing:-0.177px;">(memory cache)</span>
<span class="t" style="left:738.91px;top:297px;color:#303942;letter-spacing:-0.215px;">template.css?5240a718cec9fbe15442a09fe362b4a5</span>
<span class="t" style="left:1078.29px;top:297px;color:#999999;letter-spacing:0.131px;">200</span>
<span class="t" style="left:1133.48px;top:297px;color:#303942;letter-spacing:-0.101px;">stylesheet</span>
<span class="t" style="left:1223.83px;top:297px;color:#303942;letter-spacing:0.131px;"><u>index.php?option=com_users&amp;view=user&amp;layout=edit&amp;id=2097</u></span>
<span class="t" style="left:1609.78px;top:297px;color:#999999;letter-spacing:-0.223px;">(disk cache)</span>
<span class="t" style="left:738.72px;top:318px;color:#303942;letter-spacing:-0.093px;">calendar.min.js</span>
<span class="t" style="left:1078.29px;top:318px;color:#999999;letter-spacing:0.131px;">200</span>
<span class="t" style="left:1133.80px;top:318px;color:#303942;">script</span>
<span class="t" style="left:1223.83px;top:318px;color:#303942;letter-spacing:0.131px;"><u>index.php?option=com_users&amp;view=user&amp;layout=edit&amp;id=2097</u></span>
<span class="t" style="left:1587.36px;top:318px;color:#999999;letter-spacing:-0.177px;">(memory cache)</span>
<span class="t" style="left:738.72px;top:339px;color:#303942;letter-spacing:0.069px;">date-helper.min.js</span>
<span class="t" style="left:1078.29px;top:339px;color:#999999;letter-spacing:0.131px;">200</span>
<span class="t" style="left:1133.80px;top:339px;color:#303942;">script</span>
<span class="t" style="left:1223.83px;top:339px;color:#303942;letter-spacing:0.131px;"><u>index.php?option=com_users&amp;view=user&amp;layout=edit&amp;id=2097</u></span>
<span class="t" style="left:1587.36px;top:339px;color:#999999;letter-spacing:-0.177px;">(memory cache)</span>
<span class="t" style="left:738.71px;top:360px;color:#303942;letter-spacing:-0.238px;">calendar.css</span>
<span class="t" style="left:1078.29px;top:360px;color:#999999;letter-spacing:0.131px;">200</span>
<span class="t" style="left:1133.48px;top:360px;color:#303942;letter-spacing:-0.101px;">stylesheet</span>
<span class="t" style="left:1223.83px;top:360px;color:#303942;letter-spacing:0.131px;"><u>index.php?option=com_users&amp;view=user&amp;layout=edit&amp;id=2097</u></span>
<span class="t" style="left:1609.78px;top:360px;color:#999999;letter-spacing:-0.223px;">(disk cache)</span>
<span class="t" style="left:737.84px;top:381px;color:#303942;letter-spacing:0.050px;">ru.js</span>
<span class="t" style="left:1078.29px;top:381px;color:#999999;letter-spacing:0.131px;">200</span>
<span class="t" style="left:1133.80px;top:381px;color:#303942;">script</span>
<span class="t" style="left:1223.83px;top:381px;color:#303942;letter-spacing:0.131px;"><u>index.php?option=com_users&amp;view=user&amp;layout=edit&amp;id=2097</u></span>
<span class="t" style="left:1587.36px;top:381px;color:#999999;letter-spacing:-0.177px;">(memory cache)</span>
<span class="t" style="left:738.00px;top:402px;color:#303942;letter-spacing:-0.132px;">bootstrap.min.js?5240a718cec9fbe15442a09fe362b4a5</span>
<span class="t" style="left:1078.29px;top:402px;color:#999999;letter-spacing:0.131px;">200</span>
<span class="t" style="left:1133.80px;top:402px;color:#303942;">script</span>
<span class="t" style="left:1223.83px;top:402px;color:#303942;letter-spacing:0.131px;"><u>index.php?option=com_users&amp;view=user&amp;layout=edit&amp;id=2097</u></span>
<span class="t" style="left:1587.36px;top:402px;color:#999999;letter-spacing:-0.177px;">(memory cache)</span>
<span class="t" style="left:738.72px;top:423px;color:#303942;letter-spacing:-0.269px;">chosen.css?5240a718cec9fbe15442a09fe362b4a5</span>
<span class="t" style="left:1078.29px;top:423px;color:#999999;letter-spacing:0.131px;">200</span>
<span class="t" style="left:1133.48px;top:423px;color:#303942;letter-spacing:-0.101px;">stylesheet</span>
<span class="t" style="left:1223.83px;top:423px;color:#303942;letter-spacing:0.131px;"><u>index.php?option=com_users&amp;view=user&amp;layout=edit&amp;id=2097</u></span>
<span class="t" style="left:1609.78px;top:423px;color:#999999;letter-spacing:-0.223px;">(disk cache)</span>
<span class="t" style="left:738.72px;top:444px;color:#303942;letter-spacing:-0.183px;">chosen.jquery.min.js?5240a718cec9fbe15442a09fe362b4a5</span>
<span class="t" style="left:1078.29px;top:444px;color:#999999;letter-spacing:0.131px;">200</span>
<span class="t" style="left:1133.80px;top:444px;color:#303942;">script</span>
<span class="t" style="left:1223.83px;top:444px;color:#303942;letter-spacing:0.131px;"><u>index.php?option=com_users&amp;view=user&amp;layout=edit&amp;id=2097</u></span>
<span class="t" style="left:1587.36px;top:444px;color:#999999;letter-spacing:-0.177px;">(memory cache)</span>
<span class="t" style="left:738.79px;top:465px;color:#303942;letter-spacing:-0.200px;">validate.js?5240a718cec9fbe15442a09fe362b4a5</span>
<span class="t" style="left:1078.29px;top:465px;color:#999999;letter-spacing:0.131px;">200</span>
<span class="t" style="left:1133.80px;top:465px;color:#303942;">script</span>
<span class="t" style="left:1223.83px;top:465px;color:#303942;letter-spacing:0.131px;"><u>index.php?option=com_users&amp;view=user&amp;layout=edit&amp;id=2097</u></span>
<span class="t" style="left:1587.36px;top:465px;color:#999999;letter-spacing:-0.177px;">(memory cache)</span>
<span class="t" style="left:737.85px;top:486px;color:#303942;letter-spacing:-0.174px;">punycode.js?5240a718cec9fbe15442a09fe362b4a5</span>
<span class="t" style="left:1078.29px;top:486px;color:#999999;letter-spacing:0.131px;">200</span>
<span class="t" style="left:1133.80px;top:486px;color:#303942;">script</span>
<span class="t" style="left:1223.83px;top:486px;color:#303942;letter-spacing:0.131px;"><u>index.php?option=com_users&amp;view=user&amp;layout=edit&amp;id=2097</u></span>
<span class="t" style="left:1587.36px;top:486px;color:#999999;letter-spacing:-0.177px;">(memory cache)</span>
<span class="t" style="left:738.71px;top:507px;color:#303942;letter-spacing:-0.229px;">core.js?5240a718cec9fbe15442a09fe362b4a5</span>
<span class="t" style="left:1078.29px;top:507px;color:#999999;letter-spacing:0.131px;">200</span>
<span class="t" style="left:1133.80px;top:507px;color:#303942;">script</span>
<span class="t" style="left:1223.83px;top:507px;color:#303942;letter-spacing:0.131px;"><u>index.php?option=com_users&amp;view=user&amp;layout=edit&amp;id=2097</u></span>
<span class="t" style="left:1587.36px;top:507px;color:#999999;letter-spacing:-0.177px;">(memory cache)</span>
<span class="t" style="left:738.91px;top:528px;color:#303942;letter-spacing:-0.196px;">tabs-state.js?5240a718cec9fbe15442a09fe362b4a5</span>
<span class="t" style="left:1078.29px;top:528px;color:#999999;letter-spacing:0.131px;">200</span>
<span class="t" style="left:1133.80px;top:528px;color:#303942;">script</span>
<span class="t" style="left:1223.83px;top:528px;color:#303942;letter-spacing:0.131px;"><u>index.php?option=com_users&amp;view=user&amp;layout=edit&amp;id=2097</u></span>
<span class="t" style="left:1587.36px;top:528px;color:#999999;letter-spacing:-0.177px;">(memory cache)</span>
<span class="t" style="left:738.18px;top:549px;color:#303942;letter-spacing:-0.131px;">polyfill.xpath.js?5240a718cec9fbe15442a09fe362b4a5</span>
<span class="t" style="left:1078.29px;top:549px;color:#999999;letter-spacing:0.131px;">200</span>
<span class="t" style="left:1133.80px;top:549px;color:#303942;">script</span>
<span class="t" style="left:1223.83px;top:549px;color:#303942;letter-spacing:0.131px;"><u>index.php?option=com_users&amp;view=user&amp;layout=edit&amp;id=2097</u></span>
<span class="t" style="left:1587.36px;top:549px;color:#999999;letter-spacing:-0.177px;">(memory cache)</span>
<span class="t" style="left:738.85px;top:570px;color:#303942;letter-spacing:-0.121px;">jquery-migrate.min.js?5240a718cec9fbe15442a09fe362b4a5</span>
<span class="t" style="left:1078.29px;top:570px;color:#999999;letter-spacing:0.131px;">200</span>
<span class="t" style="left:1133.80px;top:570px;color:#303942;">script</span>
<span class="t" style="left:1223.83px;top:570px;color:#303942;letter-spacing:0.131px;"><u>index.php?option=com_users&amp;view=user&amp;layout=edit&amp;id=2097</u></span>
<span class="t" style="left:1587.36px;top:570px;color:#999999;letter-spacing:-0.177px;">(memory cache)</span>
<span class="t" style="left:738.85px;top:591px;color:#303942;letter-spacing:-0.106px;">jquery-noconflict.js?5240a718cec9fbe15442a09fe362b4a5</span>
<span class="t" style="left:1078.29px;top:591px;color:#999999;letter-spacing:0.131px;">200</span>
<span class="t" style="left:1133.80px;top:591px;color:#303942;">script</span>
<span class="t" style="left:1223.83px;top:591px;color:#303942;letter-spacing:0.131px;"><u>index.php?option=com_users&amp;view=user&amp;layout=edit&amp;id=2097</u></span>
<span class="t" style="left:1587.36px;top:591px;color:#999999;letter-spacing:-0.177px;">(memory cache)</span>
<span class="t" style="left:738.85px;top:612px;color:#303942;letter-spacing:-0.156px;">jquery.min.js?5240a718cec9fbe15442a09fe362b4a5</span>
<span class="t" style="left:1078.29px;top:612px;color:#999999;letter-spacing:0.131px;">200</span>
<span class="t" style="left:1133.80px;top:612px;color:#303942;">script</span>
<span class="t" style="left:1223.83px;top:612px;color:#303942;letter-spacing:0.131px;"><u>index.php?option=com_users&amp;view=user&amp;layout=edit&amp;id=2097</u></span>
<span class="t" style="left:1587.36px;top:612px;color:#999999;letter-spacing:-0.177px;">(memory cache)</span>
<span class="t" style="left:738.63px;top:633px;color:#303942;letter-spacing:0.180px;">index.php?option=com_users&amp;view=user&amp;layout=edit&amp;id=<span style="font-size:9.5px">…</span></span>
<span class="t" style="left:1078.29px;top:633px;color:#303942;letter-spacing:0.131px;">200</span>
<span class="t" style="left:1133.94px;top:633px;color:#303942;letter-spacing:0.196px;">document</span>
<span class="t" style="left:1224.22px;top:633px;color:#303942;letter-spacing:0.177px;"><u>/administrator/index.php?option=com_users&amp;layout=edit&amp;id=0</u></span>
<span class="t" style="left:1632.78px;top:633px;color:#303942;letter-spacing:-0.581px;">52.9 KB</span>
<span class="t" style="left:738.62px;top:654px;color:#303942;letter-spacing:0.177px;">index.php?option=com_users&amp;layout=edit&amp;id=0</span>
<span class="t" style="left:1078.21px;top:654px;color:#303942;letter-spacing:0.183px;">303</span>
<span class="t" style="left:1133.93px;top:654px;color:#303942;letter-spacing:0.514px;">text/html</span>
<span class="t" style="left:1223.91px;top:654px;color:#303942;letter-spacing:-0.392px;"><u>core.js:1</u></span>
<span class="t" style="left:1642.78px;top:654px;color:#303942;letter-spacing:-0.490px;">133 B</span>
</body></html>
